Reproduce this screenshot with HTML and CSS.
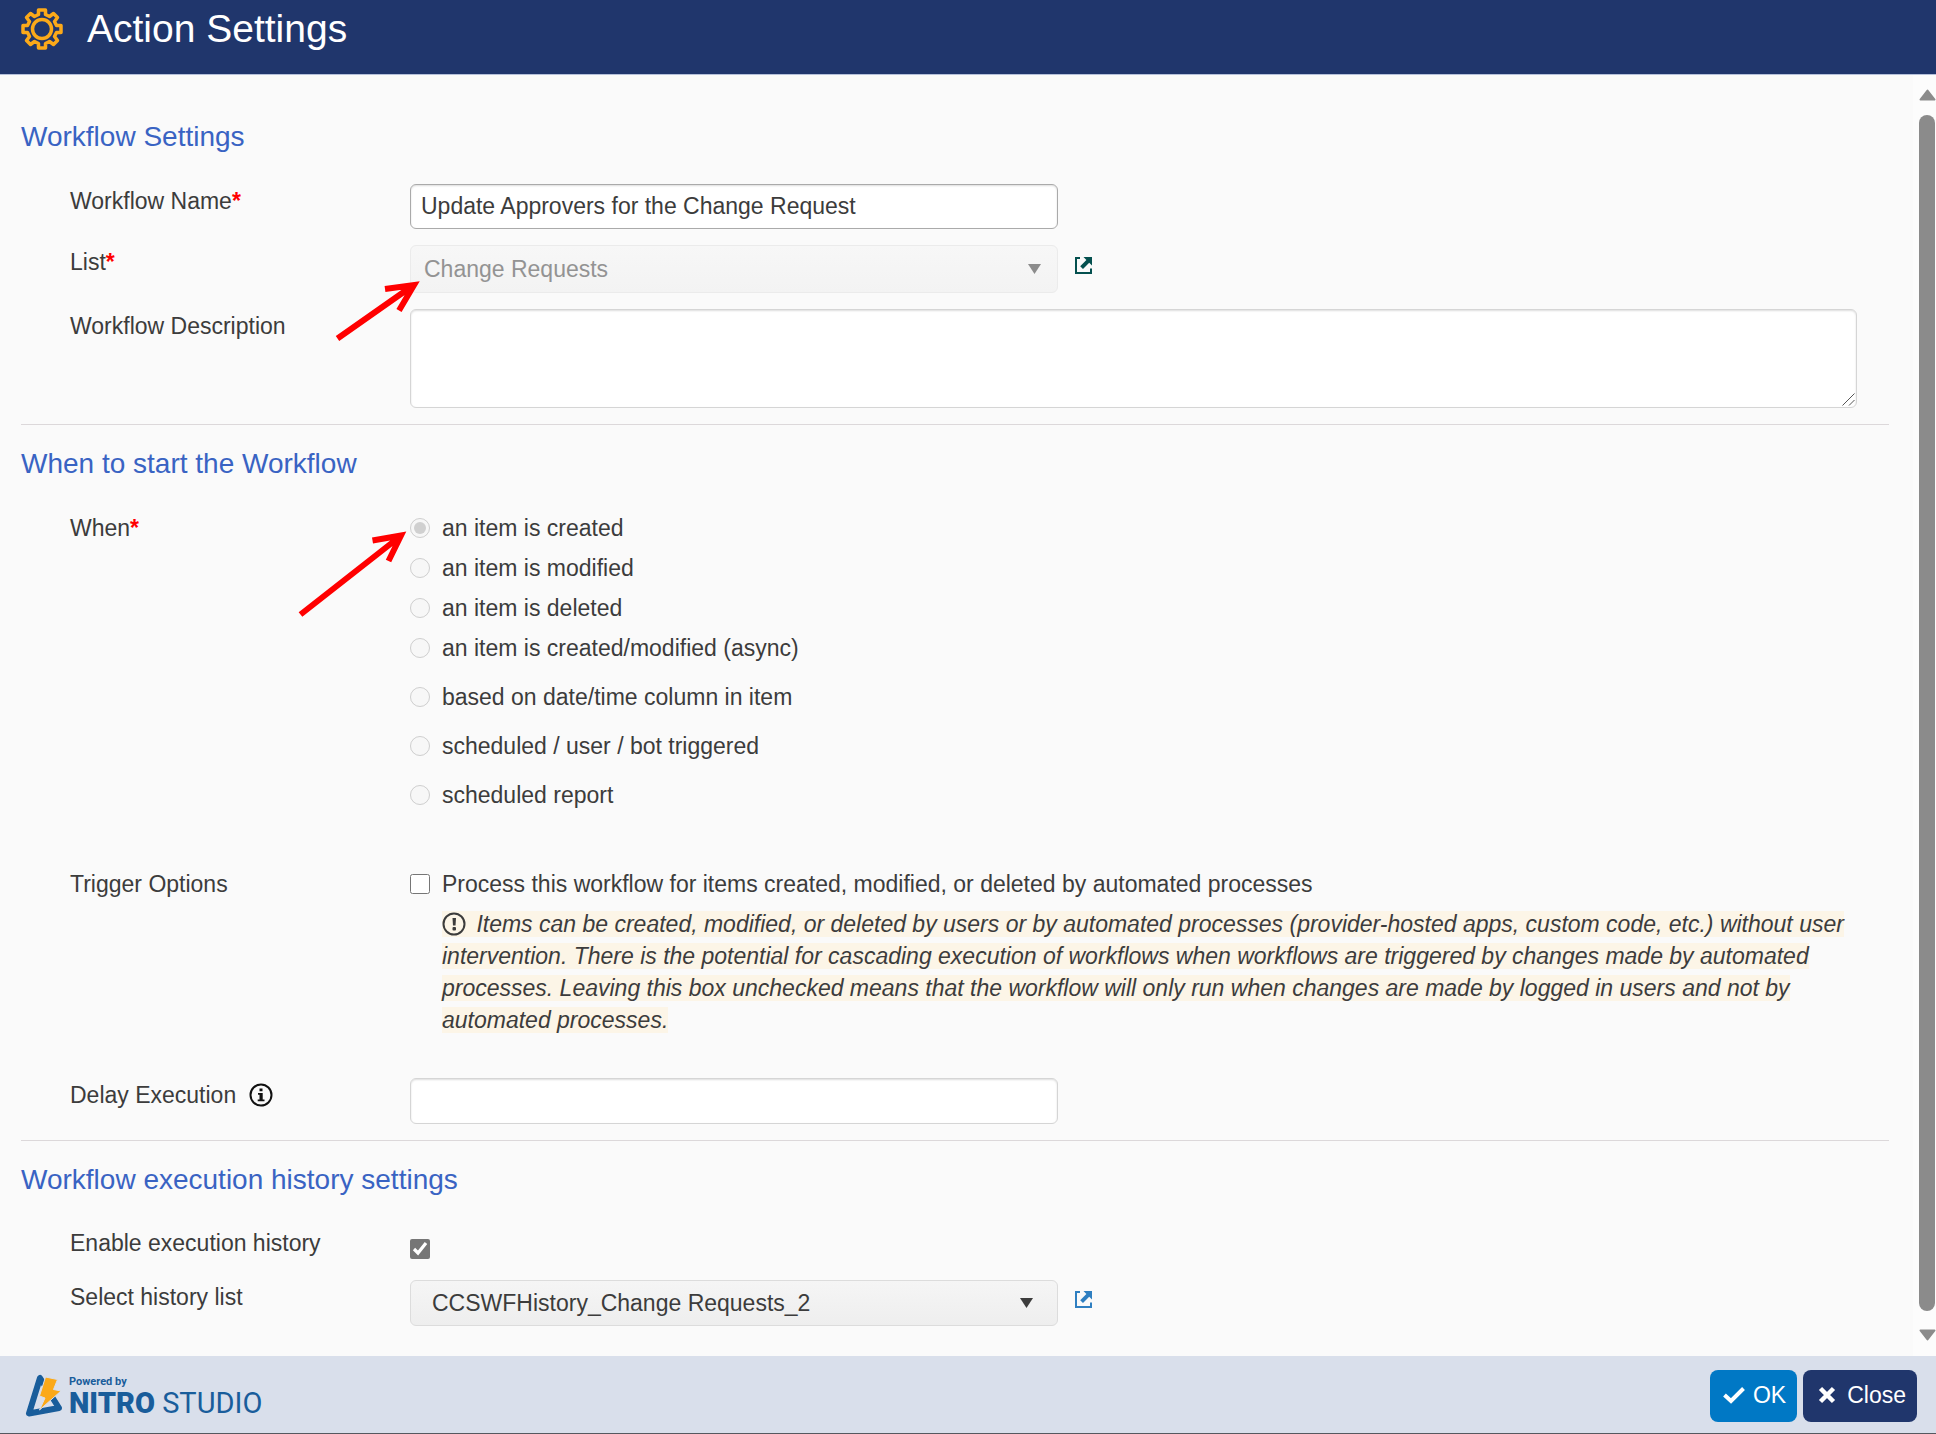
FILE: index.html
```html
<!DOCTYPE html>
<html lang="en">
<head>
<meta charset="utf-8">
<meta name="viewport" content="width=device-width, initial-scale=1">
<title>Action Settings</title>
<link rel="stylesheet" href="styles.css">
</head>
<body>
<header class="topbar">
  <svg class="topbar-icon" viewBox="0 0 42 42" aria-hidden="true">
    <g fill="none" stroke="#fba919" stroke-width="3.500" stroke-linejoin="round">
      <path d="M17.500 2H24.500V6.500L28.500 8.500L32.500 5.500L36.500 9.500L33.500 13.500L35.500 17.500H40V24.500H35.500L33.500 28.500L36.500 32.500L32.500 36.500L28.500 33.500L24.500 35.500V40H17.500V35.500L13.500 33.500L9.500 36.500L5.500 32.500L8.500 28.500L6.500 24.500H2V17.500H6.500L8.500 13.500L5.500 9.500L9.500 5.500L13.500 8.500L17.500 6.500Z"/>
      <circle cx="21" cy="21" r="9.500"/>
    </g>
  </svg>
  <h1 class="topbar-title">Action Settings</h1>
</header>

<div class="workspace">
  <main class="content">
    <section class="section">
      <h2 class="section-title">Workflow Settings</h2>
      <div class="row">
        <label class="label" for="wf-name">Workflow Name<span class="required">*</span></label>
        <div class="field"><input class="text-input strong" id="wf-name" type="text" value="Update Approvers for the Change Request"></div>
      </div>
      <div class="row">
        <label class="label" for="wf-list">List<span class="required">*</span></label>
        <div class="field">
          <div class="select-box">
            <select class="select locked" id="wf-list" disabled><option>Change Requests</option></select>
            <span class="caret locked-caret"></span>
          </div>
          <a class="open-link dark" href="#" aria-label="Open list">
            <svg viewBox="0 0 17 17" aria-hidden="true"><path d="M5 1H1V16H16V11.500" fill="none" stroke="currentColor" stroke-width="2"/><path d="M8.500 0H17V8.500L14.200 5.800L8 12L5.200 9.200L11.400 3Z" fill="currentColor"/></svg>
          </a>
          <svg class="pointer pointer-list" viewBox="0 0 92 68" aria-hidden="true"><path d="M7.500 63.500L83 10.500M55 14L84 10L69 35.500"/></svg>
        </div>
      </div>
      <div class="row">
        <label class="label" for="wf-desc">Workflow Description</label>
        <div class="field">
          <textarea class="text-area" id="wf-desc"></textarea>
          <svg class="grip" viewBox="0 0 13 13" aria-hidden="true"><path d="M0.500 12.500L12.500 0.500M7 12.500L12.500 7"/></svg>
        </div>
      </div>
    </section>

    <section class="section">
      <h2 class="section-title">When to start the Workflow</h2>
      <div class="row" role="radiogroup" aria-labelledby="when-label">
        <span class="label" id="when-label">When<span class="required">*</span></span>
        <div class="field options">
          <label class="option"><input type="radio" name="when" checked disabled>an item is created</label>
          <label class="option"><input type="radio" name="when" disabled>an item is modified</label>
          <label class="option"><input type="radio" name="when" disabled>an item is deleted</label>
          <label class="option"><input type="radio" name="when" disabled>an item is created/modified (async)</label>
          <label class="option spaced"><input type="radio" name="when" disabled>based on date/time column in item</label>
          <label class="option spaced"><input type="radio" name="when" disabled>scheduled / user / bot triggered</label>
          <label class="option spaced"><input type="radio" name="when" disabled>scheduled report</label>
          <svg class="pointer pointer-when" viewBox="0 0 115 96" aria-hidden="true"><path d="M5.500 89.500L105 11.500M77.500 15.500L106 10.500L93.500 36"/></svg>
        </div>
      </div>
      <div class="row trigger">
        <span class="label">Trigger Options</span>
        <div class="field options trigger-options">
          <label class="option"><input type="checkbox">Process this workflow for items created, modified, or deleted by automated processes</label>
          <p class="note"><span class="note-text"><svg class="note-icon" viewBox="0 0 24 24" aria-hidden="true"><circle cx="12" cy="12" r="10.500" fill="none" stroke="currentColor" stroke-width="2"/><path d="M10.500 6H14L13.500 13.500H11Z" fill="currentColor"/><rect x="10.500" y="15" width="3.500" height="3.500" rx="1" fill="currentColor"/></svg> Items can be created, modified, or deleted by users or by automated processes (provider-hosted apps, custom code, etc.) without user intervention. There is the potential for cascading execution of workflows when workflows are triggered by changes made by automated processes. Leaving this box unchecked means that the workflow will only run when changes are made by logged in users and not by automated processes.</span></p>
        </div>
      </div>
      <div class="row delay">
        <label class="label" for="wf-delay">Delay Execution
          <svg class="info-icon" viewBox="0 0 24 24" aria-hidden="true"><circle cx="12" cy="12" r="10.500" fill="none" stroke="#111" stroke-width="2"/><path d="M10.500 5.500H13.500V8.200H10.500ZM9 10H13.700V16.500H15.500V18.200H8.700V16.500H10.500V11.700H9Z" fill="#111"/></svg>
        </label>
        <div class="field"><input class="text-input" id="wf-delay" type="text"></div>
      </div>
    </section>

    <section class="section">
      <h2 class="section-title">Workflow execution history settings</h2>
      <div class="row">
        <label class="label" for="wf-history">Enable execution history</label>
        <div class="field"><input class="history-check" id="wf-history" type="checkbox" checked></div>
      </div>
      <div class="row">
        <label class="label" for="wf-history-list">Select history list</label>
        <div class="field">
          <div class="select-box">
            <select class="select" id="wf-history-list"><option>CCSWFHistory_Change Requests_2</option></select>
            <span class="caret"></span>
          </div>
          <a class="open-link" href="#" aria-label="Open history list">
            <svg viewBox="0 0 17 17" aria-hidden="true"><path d="M5 1H1V16H16V11.500" fill="none" stroke="currentColor" stroke-width="2"/><path d="M8.500 0H17V8.500L14.200 5.800L8 12L5.200 9.200L11.400 3Z" fill="currentColor"/></svg>
          </a>
        </div>
      </div>
    </section>
  </main>
  <div class="scrollbar" aria-hidden="true">
    <svg class="scroll-arrow" viewBox="0 0 17 12"><path d="M8.500 1.500L15.500 10.500H1.500Z"/></svg>
    <div class="scroll-thumb"></div>
    <svg class="scroll-arrow" viewBox="0 0 17 12"><path d="M8.500 10.500L15.500 1.500H1.500Z"/></svg>
  </div>
</div>

<footer class="footer">
  <div class="brand">
    <svg class="brand-mark" viewBox="0 0 38 44" aria-hidden="true">
      <path d="M15 4L4 39.500L34 34Z" fill="none" stroke="#195d9b" stroke-width="6" stroke-linejoin="round"/>
      <path d="M20.500 3L32.500 5.500L28.500 15.500L36 17L14.500 36L20 24L14.500 22Z" fill="#fba919" stroke="#d9dfeb" stroke-width="1"/>
    </svg>
    <div class="brand-text">
      <span class="brand-small">Powered by</span>
      <span class="brand-name"><b>NITRO</b> STUDIO</span>
    </div>
  </div>
  <div class="actions">
    <button class="button ok" type="button">
      <svg class="check-icon" viewBox="0 0 24 18" aria-hidden="true"><path d="M2.500 9L9 15L21.500 2.500" fill="none" stroke="currentColor" stroke-width="4"/></svg>OK
    </button>
    <button class="button close" type="button">
      <svg class="close-icon" viewBox="0 0 18 18" aria-hidden="true"><path d="M2.500 2.500L15.500 15.500M15.500 2.500L2.500 15.500" fill="none" stroke="currentColor" stroke-width="4.500"/></svg>Close
    </button>
  </div>
</footer>
</body>
</html>
```
FILE: styles.css
```css
* {
  box-sizing: border-box;
}

body {
  display: flex;
  flex-direction: column;
  min-height: 100vh;
  margin: 0;
  background: #fafafa;
  color: #3c3c3c;
  font-family: "Liberation Sans", Arial, sans-serif;
  font-size: 23px;
  line-height: 28px;
}

input,
select,
textarea,
button {
  margin: 0;
  color: inherit;
  font: inherit;
}

.topbar {
  display: flex;
  align-items: center;
  gap: 24px;
  padding: 6px 21px 22px;
  border-bottom: 1px solid #b5c0da;
  background: #20366c;
}

.topbar-icon {
  width: 42px;
  height: 42px;
}

.topbar-title {
  margin: 0;
  color: #fff;
  font-size: 39px;
  font-weight: 400;
  line-height: 46px;
}

.workspace {
  display: flex;
  flex: 1;
}

.content {
  flex: 1;
  min-width: 0;
  padding: 23px 24px 29px 21px;
}

.section {
  display: flex;
  flex-direction: column;
  gap: 16px;
  padding: 23px 0 16px;
}

.section + .section {
  border-top: 1px solid #dcd8da;
}

.section:last-child {
  gap: 21px;
  padding-bottom: 0;
}

.section-title {
  margin: 0 0 15px;
  color: #3963c3;
  font-size: 28px;
  font-weight: 400;
  line-height: 32px;
}

.section:last-child .section-title {
  margin-bottom: 9px;
}

.row {
  display: grid;
  grid-template-columns: 340px minmax(0, 1fr);
  padding: 0 32px 0 49px;
}

.label {
  padding-top: 3px;
}

.required {
  color: #f00;
  font-weight: 700;
}

.field {
  display: flex;
  position: relative;
}

.text-input,
.text-area {
  border: 1px solid #d5d5d5;
  border-radius: 6px;
  background: #fff;
  box-shadow: inset 0 1px 2px #ddd;
}

.text-input {
  width: 648px;
  height: 46px;
  padding: 0 10px;
}

.text-input.strong {
  height: 45px;
  border-color: #aaa;
}

.text-area {
  display: block;
  width: 100%;
  height: 99px;
  padding: 8px 10px;
  resize: vertical;
}

.text-area::-webkit-resizer {
  background: transparent;
}

.grip {
  position: absolute;
  right: 2px;
  bottom: 2px;
  width: 13px;
  height: 13px;
  fill: none;
  stroke: #555;
  stroke-width: 1;
  pointer-events: none;
}

.select-box {
  position: relative;
  width: 648px;
}

.select {
  appearance: none;
  display: block;
  width: 100%;
  height: 46px;
  padding: 0 48px 0 21px;
  border: 1px solid #dcdcdc;
  border-radius: 6px;
  background: linear-gradient(#f5f5f5, #eee);
}

.select.locked {
  height: 48px;
  padding-left: 13px;
  border-color: #ebebeb;
  background: linear-gradient(#f7f7f7, #f3f3f3);
  color: #939393;
  opacity: 1;
}

.caret {
  position: absolute;
  top: 18px;
  right: 25px;
  width: 13px;
  height: 10px;
  background: #3c3c3c;
  clip-path: polygon(0 0, 100% 0, 50% 100%);
  pointer-events: none;
}

.locked-caret {
  top: 19px;
  right: 17px;
  background: #8c8c8c;
}

.open-link {
  height: 17px;
  margin: 11px 0 0 17px;
  color: #2f7fc1;
}

.open-link.dark {
  margin-top: 12px;
  color: #04504f;
}

.open-link svg {
  display: block;
  width: 17px;
  height: 17px;
}

.pointer {
  position: absolute;
  fill: none;
  stroke: #f00;
  stroke-width: 6;
  pointer-events: none;
}

.pointer-list {
  top: 30px;
  left: -80px;
  width: 92px;
  height: 68px;
}

.pointer-when {
  top: 14px;
  left: -115px;
  width: 115px;
  height: 96px;
}

.options {
  flex-direction: column;
  align-items: flex-start;
  gap: 12px;
  padding-top: 3px;
}

.trigger-options {
  gap: 10px;
}

.option {
  display: flex;
  align-items: center;
  gap: 12px;
}

.option.spaced {
  margin-top: 9px;
}

.option input,
.history-check {
  flex: none;
  width: 20px;
  height: 20px;
}

.history-check {
  margin-top: 13px;
  accent-color: #767676;
}

.trigger {
  margin-top: 42px;
}

.note {
  margin: 0 0 0 32px;
  font-style: italic;
  line-height: 32px;
}

.note-text {
  background: #fcf5e7;
}

.note-icon,
.info-icon {
  width: 24px;
  height: 24px;
  vertical-align: -4px;
}

.note-icon {
  margin-right: 4px;
}

.info-icon {
  margin-left: 6px;
}

.delay {
  margin-top: 26px;
}

.scrollbar {
  display: flex;
  flex-direction: column;
  align-items: center;
  width: 23px;
  padding: 14px 0 15px 5px;
  background: #fcfcfc;
}

.scroll-arrow {
  width: 17px;
  height: 12px;
  fill: #8b8b8b;
  stroke: #8b8b8b;
  stroke-width: 2;
  stroke-linejoin: round;
}

.scroll-thumb {
  flex: 1;
  width: 16px;
  margin: 14px 0 18px;
  border-radius: 8px;
  background: #8b8b8b;
}

.footer {
  display: flex;
  align-items: center;
  justify-content: space-between;
  padding: 14px 19px 11px 25px;
  border-bottom: 1px solid #55585f;
  background: #d9dfeb;
}

.brand {
  display: flex;
  gap: 6px;
  color: #195d9b;
  font-family: Roboto, sans-serif;
}

.brand-mark {
  width: 38px;
  height: 44px;
}

.brand-text {
  display: flex;
  flex-direction: column;
}

.brand-small {
  font-size: 11px;
  font-weight: 700;
  line-height: 15px;
}

.brand-name {
  font-size: 29px;
  line-height: 28px;
}

.brand-name b {
  font-weight: 900;
}

.actions {
  display: flex;
  gap: 6px;
}

.button {
  display: flex;
  align-items: center;
  height: 52px;
  padding: 0 11px 2px 12px;
  border: 0;
  border-radius: 8px;
  color: #fff;
  cursor: pointer;
}

.button.ok {
  gap: 7px;
  background: #0078c5;
}

.button.close {
  gap: 11px;
  padding-left: 15px;
  background: #20366c;
}

.check-icon {
  width: 24px;
  height: 18px;
}

.close-icon {
  width: 18px;
  height: 18px;
}
```
